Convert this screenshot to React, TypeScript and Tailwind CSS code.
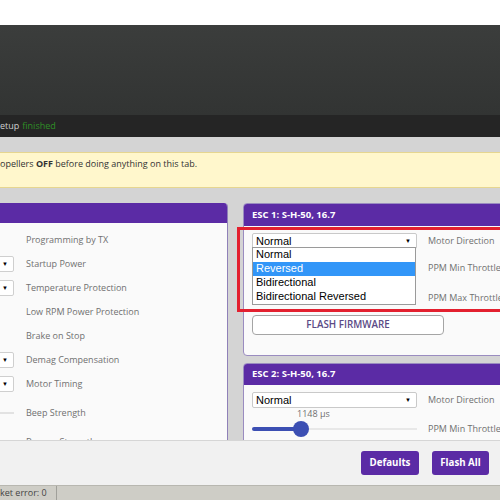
import React from "react";

const leftRows: { label: string; kind: "check" | "select" | "slider"; h: string }[] = [
  { label: "Programming by TX", kind: "check", h: "h-[24px]" },
  { label: "Startup Power", kind: "select", h: "h-[24px]" },
  { label: "Temperature Protection", kind: "select", h: "h-[24px]" },
  { label: "Low RPM Power Protection", kind: "check", h: "h-[24px]" },
  { label: "Brake on Stop", kind: "check", h: "h-[24px]" },
  { label: "Demag Compensation", kind: "select", h: "h-[24px]" },
  { label: "Motor Timing", kind: "select", h: "h-[24px]" },
  { label: "Beep Strength", kind: "slider", h: "h-[34px]" },
  { label: "Beacon Strength", kind: "slider", h: "h-[24px]" },
];

function Arrow() {
  return <span className="text-[6px] leading-none text-black">▼</span>;
}

function SelectBox({ value, open }: { value: string; open?: boolean }) {
  return (
    <div className="relative w-[165px] h-[16px] shrink-0">
      <div className="w-full h-full bg-white border border-[#c9c9c9] rounded-[2px] flex items-center justify-between pl-[3px] pr-[5px] font-['Liberation_Sans',Arial,sans-serif] text-[11px] leading-[13px] text-black">
        <span>{value}</span>
        <Arrow />
      </div>
      {open && (
        <div className="absolute left-0 top-[14px] w-[164px] bg-white border border-[#9a9a9a] z-10 font-['Liberation_Sans',Arial,sans-serif] text-[11px] text-black leading-[13px]">
          <div className="h-[14px] px-[3px]">Normal</div>
          <div className="h-[14px] px-[3px] bg-[#3296f8] text-white">Reversed</div>
          <div className="h-[14px] px-[3px]">Bidirectional</div>
          <div className="h-[14px] px-[3px]">Bidirectional Reversed</div>
        </div>
      )}
    </div>
  );
}

export default function App() {
  return (
    <div className="w-[500px] h-[500px] overflow-hidden flex flex-col bg-[#d4d4d4] font-['Open_Sans',sans-serif]">
      <div className="h-[25px] shrink-0 bg-white" />
      <div className="h-[90px] shrink-0 bg-gradient-to-b from-[#3b3d3c] to-[#323433]" />
      <div className="h-[22px] shrink-0 bg-[#252525] flex items-center text-[9px]">
        <span className="text-[#cfcfcf]">etup</span>
        <span className="ml-[3px] text-[#2f8f26]">finished</span>
      </div>

      <div className="flex-1 min-h-0 overflow-hidden pt-[15px]">
        <div className="h-[36px] bg-[#fff7cc] border-y border-[#e6d690] pt-[4px] text-[9px] text-[#333]">
          opellers <b className="font-bold">OFF</b> before doing anything on this tab.
        </div>

        <div className="mt-[15px] flex items-start gap-[15px]">
          {/* left panel */}
          <div className="w-[228px] shrink-0 bg-[#fafafa] border-r border-[#8f80b8] rounded-tr-[4px] overflow-hidden h-[300px]">
            <div className="h-[20px] bg-[#5b2ba5]" />
            <div className="pt-[5px]">
              {leftRows.map((r) => (
                <div key={r.label} className={`${r.h} flex items-center`}>
                  <div className="w-[14px] shrink-0 flex items-center justify-end">
                    {r.kind === "select" && (
                      <div className="w-[30px] -ml-[16px] h-[16px] shrink-0 bg-white border border-[#cfcfcf] rounded-[2px] flex items-center justify-end pr-[5px]">
                        <Arrow />
                      </div>
                    )}
                    {r.kind === "slider" && <div className="w-[14px] h-[2px] bg-[#e2e2e2]" />}
                  </div>
                  <span className="ml-[12px] text-[9px] text-[#707070]">{r.label}</span>
                </div>
              ))}
            </div>
          </div>

          {/* right column */}
          <div className="relative w-[280px] shrink-0 flex flex-col gap-[7px]">
            <div className="h-[153px] bg-[#fafafa] border border-[#9a8cc0] rounded-[4px] overflow-hidden flex flex-col">
              <div className="h-[22px] shrink-0 bg-[#5b2ba5] flex items-center px-[8px] text-white font-bold text-[9.5px]">
                ESC 1: S-H-50, 16.7
              </div>
              <div className="px-[8px] pt-[7px]">
                <div className="flex items-center">
                  <SelectBox value="Normal" open />
                  <span className="ml-[11px] text-[9px] text-[#707070] whitespace-nowrap">Motor Direction</span>
                </div>
                <div className="mt-[4px] h-[30px] flex items-center">
                  <div className="w-[165px] shrink-0" />
                  <span className="ml-[11px] text-[9px] text-[#707070] whitespace-nowrap">PPM Min Throttle</span>
                </div>
                <div className="h-[29px] flex items-center">
                  <div className="w-[165px] shrink-0" />
                  <span className="ml-[11px] text-[9px] text-[#707070] whitespace-nowrap">PPM Max Throttle</span>
                </div>
                <button className="mt-[3px] w-[192px] h-[20px] bg-white border border-[#a5a5a5] rounded-[4px] flex items-center justify-center text-[9.8px] font-semibold text-[#5a4a85]">
                  FLASH FIRMWARE
                </button>
              </div>
            </div>

            <div className="h-[120px] bg-[#fafafa] border border-[#9a8cc0] rounded-[4px] overflow-hidden flex flex-col">
              <div className="h-[21px] shrink-0 bg-[#5b2ba5] flex items-center px-[8px] text-white font-bold text-[9.5px]">
                ESC 2: S-H-50, 16.7
              </div>
              <div className="px-[8px] pt-[7px]">
                <div className="flex items-center">
                  <SelectBox value="Normal" />
                  <span className="ml-[11px] text-[9px] text-[#707070] whitespace-nowrap">Motor Direction</span>
                </div>
                <div className="h-[12px] pl-[45px] flex items-center text-[9px] text-[#707070]">1148 µs</div>
                <div className="h-[18px] flex items-center">
                  <div className="relative w-[165px] h-[18px] shrink-0 flex items-center">
                    <div className="w-full h-[2px] bg-[#e8e8e8]" />
                    <div className="absolute left-0 top-[7px] w-[49px] h-[4px] rounded-full bg-[#3c4fb3]" />
                    <div className="absolute left-[41px] top-[1px] w-[16px] h-[16px] rounded-full bg-[#3c4fb3]" />
                  </div>
                  <span className="ml-[11px] text-[9px] text-[#707070] whitespace-nowrap">PPM Min Throttle</span>
                </div>
                <div className="pl-[103px] text-[9px] text-[#707070]">1000</div>
              </div>
            </div>

            <div className="absolute left-[-6px] top-[24px] w-[300px] h-[85px] border-[3px] border-[#e3202f] pointer-events-none" />
          </div>
        </div>
      </div>

      <div className="h-[45px] shrink-0 bg-[#f1f1f1] border-t border-[#d6d6d6] flex items-center justify-end gap-[13px] pr-[11px]">
        <button className="w-[58px] h-[24px] rounded-[3px] bg-[#5b2ba5] text-white font-bold text-[9.7px]">Defaults</button>
        <button className="w-[57px] h-[24px] rounded-[3px] bg-[#5b2ba5] text-white font-bold text-[9.7px]">Flash All</button>
      </div>
      <div className="h-[15px] shrink-0 bg-[#cecdc6] border-t border-[#b8b7b0] flex items-center">
        <div className="w-[57px] h-full border-r border-[#a0a09a] flex items-center text-[9px] text-[#444]">ket error: 0</div>
      </div>
    </div>
  );
}
